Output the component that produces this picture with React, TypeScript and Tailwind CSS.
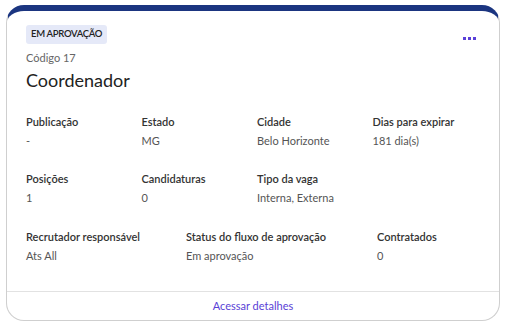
import React from 'react';

const rowOne = [
  { label: 'Publicação', value: '-' },
  { label: 'Estado', value: 'MG' },
  { label: 'Cidade', value: 'Belo Horizonte' },
  { label: 'Dias para expirar', value: '181 dia(s)' },
];

const rowTwo = [
  { label: 'Posições', value: '1' },
  { label: 'Candidaturas', value: '0' },
  { label: 'Tipo da vaga', value: 'Interna, Externa' },
];

const rowThree = [
  { label: 'Recrutador responsável', value: 'Ats All' },
  { label: 'Status do fluxo de aprovação', value: 'Em aprovação' },
  { label: 'Contratados', value: '0' },
];

const Field = ({ label, value }: { label: string; value: string }) => (
  <div className="flex flex-col">
    <span className="text-[11px] leading-[14px] font-semibold text-[#333]">{label}</span>
    <span className="text-[11px] leading-[14px] text-[#555] mt-[5px]">{value}</span>
  </div>
);

const App = () => {
  return (
    <div className="w-[508px] h-[329px] bg-white pt-[5px] pl-[6px]" style={{ fontFamily: 'Lato, "Open Sans", sans-serif' }}>
      <div className="w-[494px] h-[316px] flex flex-col rounded-[18px] border border-[#cfcfcf] border-t-[6px] border-t-[#1b3580] bg-white">
        <div className="flex-1 px-[19px] pt-[14px]">
          <div className="flex items-start justify-between">
            <span className="bg-[#e5e9f8] rounded-[3px] px-[5px] h-[19px] flex items-center text-[9.5px] tracking-[-0.3px] font-semibold text-[#222]">
              EM APROVAÇÃO
            </span>
            <div className="flex gap-[2px] mt-[12px] mr-[4px]">
              <span className="w-[3px] h-[3px] bg-[#5a40d8]" />
              <span className="w-[3px] h-[3px] bg-[#5a40d8]" />
              <span className="w-[3px] h-[3px] bg-[#5a40d8]" />
            </div>
          </div>
          <div className="text-[11px] text-[#666] mt-[7px] leading-[14px]">Código 17</div>
          <div className="text-[18px] text-[#222] mt-[4px] leading-[22px]">Coordenador</div>

          <div className="grid grid-cols-4 mt-[24px] w-[462px]">
            {rowOne.map((f) => <Field key={f.label} {...f} />)}
          </div>
          <div className="grid grid-cols-4 mt-[24px] w-[462px]">
            {rowTwo.map((f) => <Field key={f.label} {...f} />)}
          </div>
          <div className="grid grid-cols-[160px_191px_1fr] mt-[25px]">
            {rowThree.map((f) => <Field key={f.label} {...f} />)}
          </div>
        </div>
        <div className="border-t border-[#e2e2e2] h-[29px] flex items-center justify-center text-[11px] text-[#5a3fd6]">
          Acessar detalhes
        </div>
      </div>
    </div>
  );
};

export default App;
